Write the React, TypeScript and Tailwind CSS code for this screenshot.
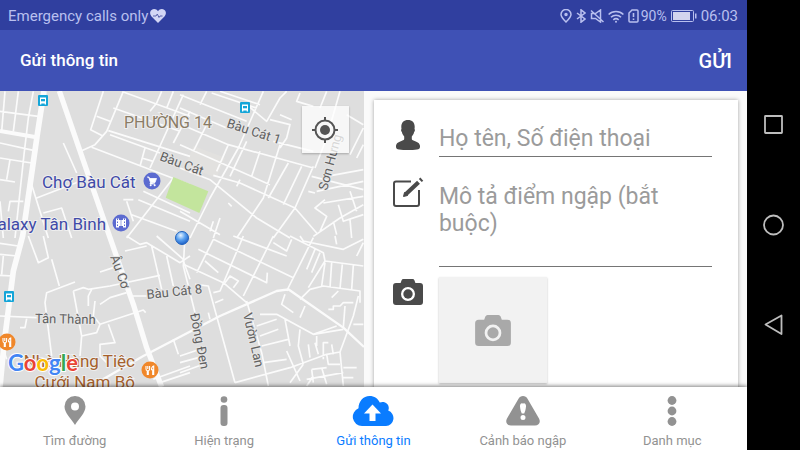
import type { ReactNode } from "react";

const INK = "#4a4a4a";

function CameraIcon({ className }: { className: string }) {
  return (
    <svg viewBox="0 0 30 26" className={className} fill="currentColor" aria-hidden="true">
      <path
        fillRule="evenodd"
        d="M10.500 0h9a2 2 0 0 1 1.900 1.300l1 2.700H27a3 3 0 0 1 3 3v16a3 3 0 0 1-3 3H3a3 3 0 0 1-3-3V7a3 3 0 0 1 3-3h4.600l1-2.700A2 2 0 0 1 10.500 0ZM15 8a7 7 0 1 0 0 14 7 7 0 0 0 0-14Z"
      />
      <circle cx="15" cy="15" r="4.700" />
    </svg>
  );
}

function PersonIcon() {
  return (
    <svg viewBox="0 0 24 30" className="h-[30px] w-6" fill={INK} aria-hidden="true">
      <path d="M12 0c4.200 0 6.700 2.600 6.700 6.800 0 1-.1 1.700-.2 2.300.7.500.5 2.200-.4 3-.4 2-1.300 3.300-2.300 4.400v2.300c0 1 .7 1.400 2.200 2 3.300 1.200 5.800 2.300 6 5.300.1 2.500-.8 3-3 3.400-2.600.4-5.600.5-9 .5s-6.400-.1-9-.5c-2.200-.4-3.100-.9-3-3.400.2-3 2.700-4.100 6-5.300 1.500-.6 2.200-1 2.200-2v-2.300c-1-1.100-1.900-2.400-2.300-4.400-.9-.8-1.100-2.500-.4-3-.1-.6-.2-1.300-.2-2.300C5.300 2.600 7.800 0 12 0Z" />
    </svg>
  );
}

function ComposeIcon() {
  return (
    <svg viewBox="0 0 32 30" className="h-[30px] w-8" fill="none" stroke={INK} strokeWidth="2" aria-hidden="true">
      <path d="M19 4.500H4a2 2 0 0 0-2 2V27a2 2 0 0 0 2 2h21a2 2 0 0 0 2-2V13" />
      <path d="M13.500 17.500 26.500 5.300" strokeWidth="4.200" />
      <path d="m11.500 19.500 1-4 3 3Z" fill={INK} strokeWidth="1" />
      <path d="m28.300 3.500 1.500-1.400" strokeWidth="4.200" />
    </svg>
  );
}

function StatusBar() {
  return (
    <div className="flex h-[30px] shrink-0 items-center justify-between bg-[#303f9f] pl-2 pr-[9px] pt-0.5 text-[15px] leading-none text-[#b9c0ef]">
      <div className="flex items-center">
        <span>Emergency calls only</span>
        <svg viewBox="0 0 16 14" className="ml-0.5 h-3.5 w-4" aria-hidden="true">
          <path d="M8 14 1.300 7.300C-.6 5-.1 2.200 1.600 1 3.700-.6 6.600 0 8 2.300 9.400 0 12.300-.6 14.400 1c1.700 1.200 2.200 4 .3 6.300Z" fill="#d3d6f5" />
          <path d="M3 7h3l1.300-2L9 8.500 10 7h2.500" fill="none" stroke="#5a62ab" />
        </svg>
      </div>
      <div className="flex items-center">
        <svg viewBox="0 0 12 14" className="h-3.5 w-3" fill="none" stroke="currentColor" strokeWidth="1.500" aria-hidden="true">
          <path d="M6 13C3 10 1 7.700 1 5.500a5 5 0 0 1 10 0C11 7.700 9 10 6 13Z" />
          <circle cx="6" cy="5.500" r="1" fill="currentColor" />
        </svg>
        <svg viewBox="0 0 10 14" className="ml-1 h-3.5 w-2.5" fill="none" stroke="currentColor" strokeWidth="1.500" aria-hidden="true">
          <path d="m1 4 8 6-4 3.200V.8L9 4l-8 6" />
        </svg>
        <svg viewBox="0 0 14 14" className="ml-1 h-3.5 w-3.5" fill="none" stroke="currentColor" strokeWidth="1.500" aria-hidden="true">
          <path d="M10.500 1v12L5.500 9.500H1.500v-5h4l5-3.500ZM1 1.500l12.500 11.500" />
        </svg>
        <svg viewBox="0 0 16 13" className="ml-1 h-[13px] w-4" fill="none" stroke="currentColor" strokeWidth="1.600" aria-hidden="true">
          <path d="M.6 4.500a10.500 10.500 0 0 1 14.800 0M3 7.300a7 7 0 0 1 10 0M5.300 9.800a4 4 0 0 1 5.400 0" />
          <circle cx="8" cy="11.800" r="1" fill="currentColor" stroke="none" />
        </svg>
        <svg viewBox="0 0 11 14" className="ml-1 h-3.5 w-[11px]" fill="none" stroke="currentColor" strokeWidth="1.500" aria-hidden="true">
          <path d="M4 1h5a1 1 0 0 1 1 1v10a1 1 0 0 1-1 1H2a1 1 0 0 1-1-1V4Z" />
          <path d="M5.500 4v4M5.500 9.500V11" strokeWidth="1.600" />
        </svg>
        <span className="ml-0.5 text-sm leading-none">90%</span>
        <svg viewBox="0 0 26 12" className="ml-1 h-3 w-[26px]" aria-hidden="true">
          <rect x=".5" y=".5" width="22" height="11" rx="1" fill="none" stroke="currentColor" />
          <rect x="2" y="2" width="17" height="8" fill="#d3d4ee" />
          <rect x="24" y="3.500" width="1.500" height="5" fill="currentColor" />
        </svg>
        <span className="ml-1">06:03</span>
      </div>
    </div>
  );
}

const MINOR_ROADS: { shift: string; d: string }[] = [
  {
    shift: "translate(0 -9)",
    d: "M15 10 5 130M55 10 40 130M100 10 85 90 72 200 45 450M0 70 115 85M0 165 100 187M0 210 95 225M0 275 45 282M30 215 20 275M70 340H30L25 370M95 290 145 450M110 330 240 280M130 375 185 360 215 450M190 165 230 255M310 10 272 125 310 145M245 188 285 170 320 130 370 10M290 85 330 100M340 60 540 130M370 12 570 85M450 70 470 45 485 10M520 10 500 60M325 128 570 205M330 140 480 195M275 178 570 290M435 180 420 235M425 210 460 220M550 20 450 240M570 70 520 165M520 270 380 450M430 310 570 375M415 335 570 400M370 335H400M380 340 400 400M395 380 530 430M0 340 10 450",
  },
  {
    shift: "translate(540 -9)",
    d: "M0 20 200 100M80 10 60 50M95 15 230 60M120 10 240 50M0 60 140 120M250 10 175 180 90 330 30 450M80 110 40 190M0 108 145 170 400 240M0 170 270 290M0 240 90 275 230 390 330 450M100 262 180 285 345 360 410 435M200 160 150 265M240 190 215 265M145 170 110 250M180 275 170 295M300 170 250 330 170 450M325 225 265 330M365 235 310 350M400 235 345 360 280 450M270 95 330 110 320 150 300 180M200 50 260 100 300 30 320 10M300 80 335 95M360 15 350 40 400 55M280 160 400 190M405 240 440 150 480 10M395 265 550 305M440 265 550 245M410 310 550 280M385 310 405 315M435 335 405 360 440 385 420 430M430 345 550 325M510 310 530 370M475 350 490 400 550 380M400 445 480 390 550 350M500 80 550 110M550 120 510 200M550 170 530 210M440 10 420 60M0 370 120 440M100 400 90 430M145 345 155 355M460 400 470 440M510 395 515 450M120 390 100 450",
  },
  {
    shift: "translate(0 435)",
    d: "M0 22 55 30M0 55 52 60M10 60 5 115M0 118 40 120M85 0 115 80 145 65 130 0M155 70 178 150M225 138 140 170 135 200 155 360M0 240 110 245M80 248 75 275H60M220 165 250 155 265 160 330 150 480 118M220 165 245 300 240 360M265 210V180L275 160M285 195 280 240 300 265 290 290 245 300M300 205 330 185 380 170M300 108 340 95M300 265 430 222 437 230M325 265 345 320 300 325V360L320 380M375 45 440 30M380 0 420 25 440 20 540 80 570 60M455 30 485 160M500 60 520 150M550 75 570 130M470 0 550 70M395 180H440M520 310 535 355M480 440 570 410M460 430 570 390M0 310 20 370",
  },
  {
    shift: "translate(540 435)",
    d: "M15 0 10 90 60 290M100 10 50 110M190 0 120 165 100 170M280 0 190 180M400 5 320 165M100 10 340 125M160 0 320 60M55 40 260 140 262 110M75 75 115 110M10 85 130 140 200 200M45 145 85 150 165 440M135 140 150 120 175 135 160 155M105 200 130 190M85 230 90 250M200 195 245 350 265 450M240 235H290L400 295 490 280M315 250 330 330M320 345 360 435M165 440 330 395 440 355 480 348M480 348 520 240 535 180M330 0 430 50 435 75 550 90M435 75 385 155M420 50 395 110M405 40 380 100M360 0 370 15 490 40 550 10M360 190 390 160 430 150 540 165V200M520 200H490L480 210H460V220H445M495 210 490 275M475 165 455 185M455 80 450 155M487 85 480 158M520 88 515 160M435 80 425 150M315 175 305 205 340 230M375 210 360 245M230 270 290 250M240 300 295 280M245 330 325 310M250 380 320 370M360 280 355 330 370 385M385 325 390 365M405 320 415 355M410 300 410 330M400 295 470 270M430 370V320H445M455 325 460 355M440 355 445 385 480 385M480 348 490 450M330 440 370 385M395 400 440 395M395 400 400 440M425 395 440 445M400 420 380 450M490 395H530M490 425H520M520 265H550M550 20 530 60M465 0 470 25M280 20 320 45 335 10M380 430 490 410M0 360 60 340M0 380 55 365 80 385M0 410 70 385",
  },
];

function Pin({ x, y, color, children }: { x: number; y: number; color: string; children: ReactNode }) {
  return (
    <g transform={`translate(${x} ${y})`}>
      <circle r="8.500" fill={color} />
      {children}
    </g>
  );
}

function TransitStop({ x, y }: { x: number; y: number }) {
  return (
    <g transform={`translate(${x} ${y})`}>
      <rect x="-5" y="-6" width="10" height="11" rx="1" fill="#14a5d8" />
      <path d="M-3-3.500h6v7h-1.300V2.500h-3.400v1H-3Z" fill="#fff" />
      <path d="M-2-2h4v2.300h-4Z" fill="#14a5d8" />
    </g>
  );
}

function Fork() {
  return (
    <path d="M-4-4v3q0 1.500 1.300 1.700V4.500h1V.7Q-.4.500-.4-1v-3M-2.200-4v3M3.700-4Q1.500-3.500 1.500-.2h1.200v4.700h1Z" fill="none" stroke="#fff" strokeWidth="1.100" />
  );
}

function CityMap() {
  return (
    <svg
      viewBox="0 0 364 296"
      preserveAspectRatio="xMinYMin slice"
      className="h-full w-full bg-[#dedede] font-[Roboto,sans-serif]"
      role="img"
      aria-label="Bản đồ"
    >
      <g transform="scale(.33333)" fill="none" stroke="#fbfbfb" strokeLinejoin="round">
        <path d="m580 165 95 35-25 60-95-35Z" fill="#e2e1df" stroke="none" />
        {MINOR_ROADS.map((tile) => (
          <path key={tile.shift} transform={tile.shift} d={tile.d} strokeWidth="5" />
        ))}
        <path d="M300 870 430 795 660 675 830 600 865 595 1030 710 1092 768" strokeWidth="7" />
        <path d="M0 120 105 138" strokeWidth="12" />
        <path d="M132 0 112 130 68 435 40 540 12 760 0 888" strokeWidth="17" />
        <path d="M178 0 240 180 330 440 400 640 440 770 485 888" strokeWidth="16" />
        <path d="m520 258 105 43-27 65-101-46Z" fill="#c3e59d" stroke="none" />
      </g>

      <TransitStop x={43} y={10} />
      <TransitStop x={245} y={17} />
      <TransitStop x={9} y={206} />

      <g fill="#616161" stroke="#e6e6e6" strokeWidth="2" className="text-[13px] [paint-order:stroke]">
        <text transform="translate(226 36) rotate(18)">Bàu Cát 1</text>
        <text transform="translate(159 69) rotate(20)">Bàu Cát</text>
        <text transform="translate(327 100) rotate(-75)">Sơn Hưng</text>
        <text transform="translate(110 166) rotate(70)">Âu Cơ</text>
        <text transform="translate(147 208) rotate(-6)">Bàu Cát 8</text>
        <text transform="translate(35 232) rotate(1)">Tân Thành</text>
        <text transform="translate(190 223) rotate(79)">Đồng Đen</text>
        <text transform="translate(243 223) rotate(77)">Vườn Lan</text>
      </g>
      <g stroke="#eeeeee" strokeWidth="2" className="text-[17px] [paint-order:stroke]">
        <text x="124" y="37" fill="#8a7c66" className="text-base">PHƯỜNG 14</text>
        <text x="42" y="97" fill="#3f4aa8">Chợ Bàu Cát</text>
        <text x="106" y="139" textAnchor="end" fill="#3f4aa8">Galaxy Tân Bình</text>
        <text x="135" y="276" textAnchor="end" fill="#a5602c">Nhà Hàng Tiệc</text>
        <text x="135" y="297" textAnchor="end" fill="#a5602c">Cưới Nam Bộ</text>
      </g>

      <Pin x={152} y={90} color="#5c6bd0">
        <path d="M-5-4h2l.6 1.500H4.500L3 1.500h-4.500L-3-3M-1.500 1.500-2 3h5" fill="#fff" stroke="#fff" strokeWidth=".8" />
        <circle cx="-1.300" cy="4.200" r="1" fill="#fff" />
        <circle cx="2.700" cy="4.200" r="1" fill="#fff" />
      </Pin>
      <Pin x={121} y={132} color="#5c6bd0">
        <path d="M-5-4.500h3v9h-3ZM2-4.500h3v9H2ZM-2-3h4v6h-4Z" fill="#fff" />
        <path d="M-3.500-4.500v9M3.500-4.500v9" stroke="#5c6bd0" strokeDasharray="1.500 1.500" />
        <path d="M0-3v6" stroke="#5c6bd0" strokeWidth=".6" />
      </Pin>
      <Pin x={7} y={251} color="#f0872a">
        <Fork />
      </Pin>
      <Pin x={150} y={279} color="#f0872a">
        <Fork />
      </Pin>

      <defs>
        <radialGradient id="locationDot" cx=".4" cy=".3" r=".7">
          <stop offset="0" stopColor="#e6f3ff" />
          <stop offset=".5" stopColor="#5ba2f0" />
          <stop offset="1" stopColor="#1f62c8" />
        </radialGradient>
      </defs>
      <circle cx="182" cy="147" r="6.500" fill="url(#locationDot)" stroke="#2263bd" />

      <text
        x="8"
        y="280"
        stroke="#fff"
        strokeWidth="2"
        className="font-[Lato,sans-serif] text-[22px] font-bold [paint-order:stroke]"
      >
        <tspan fill="#4285f4">G</tspan>
        <tspan fill="#ea4335">o</tspan>
        <tspan fill="#fbbc05">o</tspan>
        <tspan fill="#4285f4">g</tspan>
        <tspan fill="#34a853">l</tspan>
        <tspan fill="#ea4335">e</tspan>
      </text>
    </svg>
  );
}

function ReportForm() {
  return (
    <form id="report" className="min-h-0 overflow-hidden bg-[#fafafa] pl-2.5 pr-[9px] pt-[9px]">
      <div className="grid grid-cols-[34px_1fr] gap-x-3.5 bg-white pb-8 pl-[17px] pr-[26px] pt-5 shadow-[0_0_4px_rgba(0,0,0,0.35)]">
        <label htmlFor="contact" className="flex justify-center">
          <PersonIcon />
        </label>
        <input
          id="contact"
          aria-label="Họ tên, Số điện thoại"
          placeholder="Họ tên, Số điện thoại"
          className="h-[37px] w-full border-b border-[#757575] text-[23px] outline-none placeholder:text-[#9b9b9b]"
        />
        <label htmlFor="description" className="flex justify-center pt-5">
          <ComposeIcon />
        </label>
        <textarea
          id="description"
          aria-label="Mô tả điểm ngập (bắt buộc)"
          placeholder="Mô tả điểm ngập (bắt buộc)"
          className="mt-[26px] block h-[84px] w-full resize-none overflow-hidden border-b border-[#757575] text-[23px] leading-[27px] outline-none placeholder:text-[#9b9b9b]"
        />
        <span className="flex justify-center pt-3 text-[#4a4a4a]">
          <CameraIcon className="h-[26px] w-[30px]" />
        </span>
        <button
          type="button"
          aria-label="Chụp ảnh"
          className="mt-2.5 flex h-[106px] w-[108px] items-center justify-center bg-[#f2f2f2] text-[#a9a9a9] shadow-[0_1px_2px_rgba(0,0,0,0.25)]"
        >
          <CameraIcon className="h-[31px] w-9" />
        </button>
      </div>
    </form>
  );
}

const TABS: { label: string; icon: ReactNode; active?: boolean }[] = [
  {
    label: "Tìm đường",
    icon: (
      <path fillRule="evenodd" d="M21 0a10.500 10.500 0 0 1 10.500 10.500C31.500 17 24.500 23 21 29 17.500 23 10.500 17 10.500 10.500A10.500 10.500 0 0 1 21 0Zm0 6.500a4 4 0 1 0 0 8 4 4 0 0 0 0-8Z" />
    ),
  },
  {
    label: "Hiện trạng",
    icon: (
      <>
        <circle cx="21" cy="3.500" r="3.300" />
        <rect x="17.500" y="9" width="7" height="21" rx="3" />
      </>
    ),
  },
  {
    label: "Gửi thông tin",
    active: true,
    icon: (
      <path fillRule="evenodd" d="M10 30A9.200 9.200 0 0 1 6.500 12.300C6.500 5.500 11.300 0 17.500 0c4.800 0 8.700 2.700 10.300 6.600 4.200-2 9 .8 9 5.400 0 .9-.2 1.800-.6 2.500A8 8 0 0 1 34 30ZM20.500 8.500 12 17.500h5.500V25h6v-7.500H29Z" />
    ),
  },
  {
    label: "Cảnh báo ngập",
    icon: (
      <path fillRule="evenodd" d="M21 0c2 0 3.500 1 4.500 2.700L37 22.500c2 3.500 0 7-4 7H9c-4 0-6-3.500-4-7L16.500 2.700C17.500 1 19 0 21 0Zm0 7c-2 0-3.200 1.500-3 3.500.2 3 1 5 1.800 7h2.400c.8-2 1.600-4 1.800-7 .2-2-1-3.500-3-3.500Zm0 12a2.500 2.500 0 1 0 0 5 2.500 2.500 0 0 0 0-5Z" />
    ),
  },
  {
    label: "Danh mục",
    icon: (
      <>
        <circle cx="21" cy="4.500" r="4.400" />
        <circle cx="21" cy="15" r="4.400" />
        <circle cx="21" cy="25.500" r="4.400" />
      </>
    ),
  },
];

function TabBar() {
  return (
    <nav className="relative grid shrink-0 grid-cols-5 bg-white pt-[9px] shadow-[0_-1px_4px_rgba(0,0,0,0.5)]">
      {TABS.map((tab) => (
        <button
          key={tab.label}
          type="button"
          className={`flex flex-col items-center gap-1.5 text-[13px] leading-[18px] ${tab.active ? "text-[#0a7cff]" : "text-[#929292]"}`}
        >
          <svg viewBox="0 0 42 30" className="h-[30px] w-[42px]" fill="currentColor" aria-hidden="true">
            {tab.icon}
          </svg>
          {tab.label}
        </button>
      ))}
    </nav>
  );
}

function SystemKeys() {
  const key = "flex size-8 items-center justify-center";
  return (
    <div className="flex w-[53px] shrink-0 flex-col items-center justify-center gap-[68px] bg-black">
      <button type="button" aria-label="Gần đây" className={key}>
        <svg viewBox="0 0 24 24" className="size-6" fill="none" stroke="#bdbdbd" strokeWidth="1.800">
          <rect x="3" y="3" width="17" height="17" rx=".5" />
        </svg>
      </button>
      <button type="button" aria-label="Trang chính" className={key}>
        <svg viewBox="0 0 24 24" className="size-6" fill="none" stroke="#bdbdbd" strokeWidth="1.800">
          <circle cx="11.500" cy="12" r="9.500" />
        </svg>
      </button>
      <button type="button" aria-label="Quay lại" className={key}>
        <svg viewBox="0 0 24 24" className="size-6" fill="none" stroke="#bdbdbd" strokeWidth="1.800" strokeLinejoin="round">
          <path d="M19.500 2.500v18.500L3.500 11.500Z" />
        </svg>
      </button>
    </div>
  );
}

export default function App() {
  return (
    <div className="flex h-screen overflow-hidden bg-black font-[Roboto,sans-serif]">
      <div className="flex min-w-0 flex-1 flex-col">
        <StatusBar />
        <header className="flex h-[61px] shrink-0 items-center justify-between bg-[#3f51b5] pl-5 pr-[15px] text-white">
          <h1 className="text-[17px] font-medium">Gửi thông tin</h1>
          <button type="submit" form="report" className="text-xl font-medium">
            GỬI
          </button>
        </header>
        <main className="grid min-h-0 flex-1 grid-cols-[19fr_20fr] grid-rows-[minmax(0,1fr)]">
          <section className="relative min-h-0 overflow-hidden">
            <CityMap />
            <button
              type="button"
              aria-label="Vị trí của tôi"
              className="absolute right-[15px] top-[15px] flex size-[47px] items-center justify-center bg-white/75 shadow-[0_1px_2px_rgba(0,0,0,0.25)]"
            >
              <svg viewBox="0 0 28 28" className="size-7" fill="none" stroke="#555" strokeWidth="2">
                <circle cx="14" cy="14" r="9.500" />
                <circle cx="14" cy="14" r="5" fill="#555" stroke="none" />
                <path d="M14 1v4M14 23v4M1 14h4M23 14h4" />
              </svg>
            </button>
          </section>
          <ReportForm />
        </main>
        <TabBar />
      </div>
      <SystemKeys />
    </div>
  );
}
